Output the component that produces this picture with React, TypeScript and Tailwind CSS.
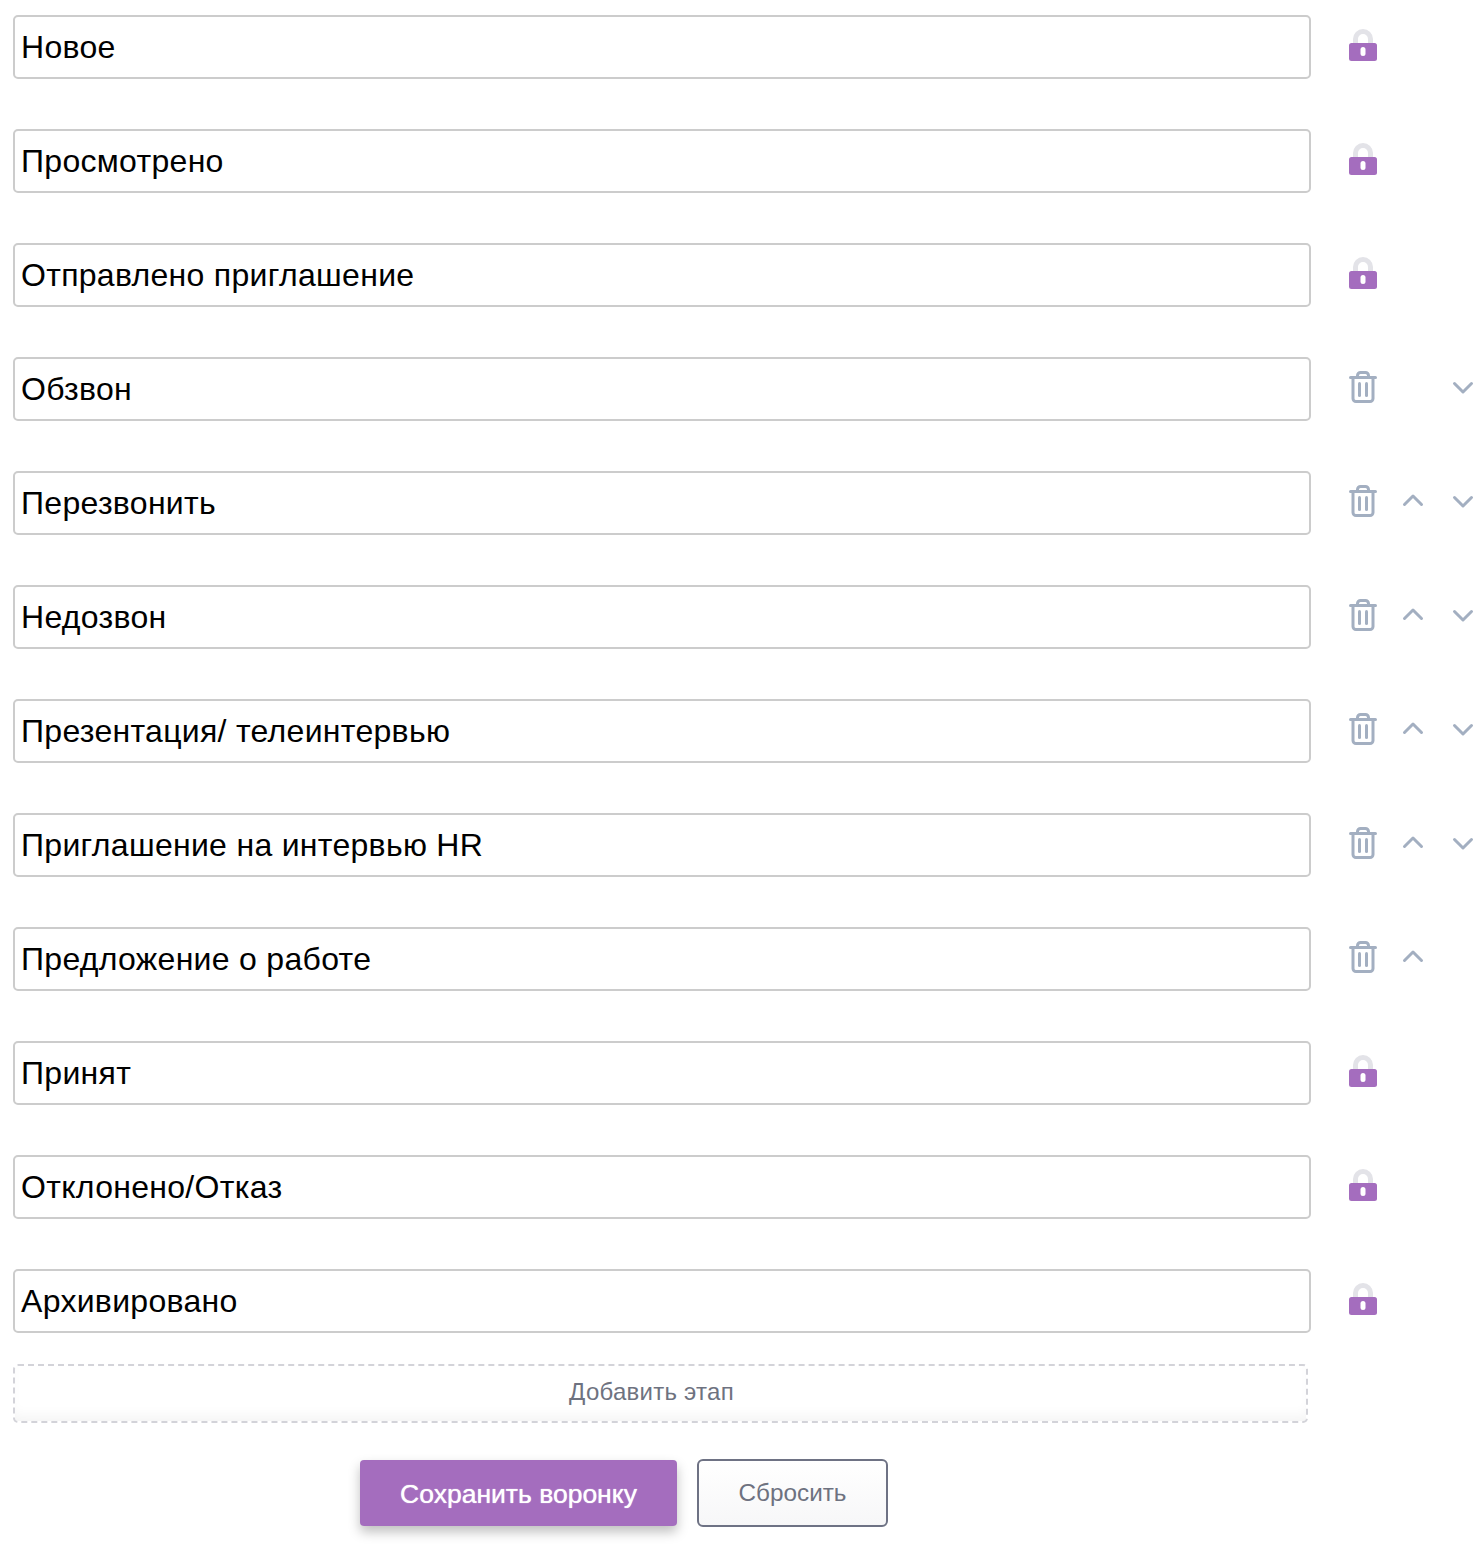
const stages = [
  { name: 'Новое', locked: true },
  { name: 'Просмотрено', locked: true },
  { name: 'Отправлено приглашение', locked: true },
  { name: 'Обзвон', down: true },
  { name: 'Перезвонить', up: true, down: true },
  { name: 'Недозвон', up: true, down: true },
  { name: 'Презентация/ телеинтервью', up: true, down: true },
  { name: 'Приглашение на интервью HR', up: true, down: true },
  { name: 'Предложение о работе', up: true },
  { name: 'Принят', locked: true },
  { name: 'Отклонено/Отказ', locked: true },
  { name: 'Архивировано', locked: true },
]

function LockIcon() {
  return (
    <svg width="28" height="32" viewBox="0 0 28 32" fill="none">
      <path d="M6.5 16V10a7.5 7.5 0 0 1 15 0v6" stroke="#e3e3e8" strokeWidth="5" />
      <rect x="0" y="14" width="28" height="18" rx="2.5" fill="#a46dbe" />
      <rect x="11.5" y="18" width="5" height="9" rx="2.5" fill="#ffffff" />
    </svg>
  )
}

function TrashIcon() {
  return (
    <svg width="28" height="32" viewBox="0 0 28 32" fill="none" stroke="#a3afc1" strokeWidth="3" strokeLinecap="round" strokeLinejoin="round">
      <path d="M1.5 6.5h25" />
      <path d="M8.5 6V4.5a3 3 0 0 1 3-3h5a3 3 0 0 1 3 3V6" />
      <path d="M4 7v20.5a3 3 0 0 0 3 3h14a3 3 0 0 0 3-3V7" />
      <path d="M10.5 12.5v12" />
      <path d="M17.5 12.5v12" />
    </svg>
  )
}

function Chevron({ up }: { up?: boolean }) {
  return (
    <svg width="22" height="14" viewBox="0 0 22 14" fill="none" stroke="#a3afc1" strokeWidth="3" strokeLinecap="round" strokeLinejoin="round" className={up ? '-translate-y-px' : 'translate-y-px'}>
      <path d={up ? 'M2.5 11.5 11 3l8.5 8.5' : 'M2.5 2.5 11 11l8.5-8.5'} />
    </svg>
  )
}

export default function App() {
  return (
    <div className="min-h-[1547px] overflow-hidden bg-white pl-[13px] pt-[15px] font-['Liberation_Sans',Arial,sans-serif]">
      <div className="flex flex-col gap-[50px]">
        {stages.map((stage) => (
          <div key={stage.name} className="flex items-center">
            <div className="flex h-[64px] w-[1298px] shrink-0 items-center rounded-[5px] border-2 border-[#cccccc] bg-white pl-[6px] text-[32px] tracking-[0.3px] text-black">
              {stage.name}
            </div>
            <div className="ml-[27px] flex shrink-0 items-center pb-[4px]">
              <div className="flex w-[50px] justify-center">
                {stage.locked ? <LockIcon /> : <TrashIcon />}
              </div>
              <div className="flex w-[50px] items-center justify-center">
                {stage.up && <Chevron up />}
              </div>
              <div className="flex w-[50px] items-center justify-center">
                {stage.down && <Chevron />}
              </div>
            </div>
          </div>
        ))}
      </div>

      <div className="mt-[31px] flex h-[59px] w-[1295px] items-center justify-center rounded-[5px] border-2 border-dashed border-[#d3d3d9] bg-white pb-[4px] pr-[18px] text-[24px] tracking-[0.25px] text-[#6e7280] shadow-[inset_0_-10px_14px_-6px_rgba(0,0,0,0.05)]">
        Добавить этап
      </div>

      <div className="mt-[36px] flex items-center pl-[347px]">
        <button className="h-[66px] w-[317px] rounded-[4px] bg-[#a46dbe] pt-[4px] text-[26.5px] text-white shadow-[0_6px_12px_rgba(0,0,0,0.25)] [text-shadow:0_0_1px_#ffffff]">
          Сохранить воронку
        </button>
        <button className="ml-[20px] h-[68px] w-[191px] rounded-[6px] border-2 border-[#6e7284] bg-gradient-to-b from-white to-[#f7f7f8] text-[24.3px] text-[#6e7280]">
          Сбросить
        </button>
      </div>
    </div>
  )
}
